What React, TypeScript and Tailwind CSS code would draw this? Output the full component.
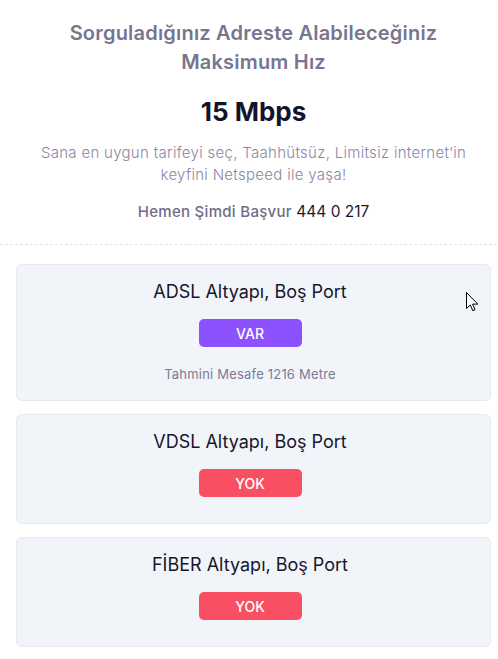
import React from "react";

const font = { fontFamily: "Inter, 'Noto Sans', sans-serif" };

function Card({
  title,
  ok,
  note,
}: {
  title: string;
  ok: boolean;
  note?: string;
}) {
  return (
    <div
      className={`flex flex-col items-center rounded-[6px] border border-[#e6e9ef] bg-[#f1f4f8] pr-[7px] pt-[13px] ${
        note ? "pb-[16px]" : "pb-[26px]"
      }`}
    >
      <div className="text-[18px] leading-[27px] text-[#16162e]">{title}</div>
      <div
        className={`mt-[14px] flex h-[28px] w-[103px] items-center justify-center rounded-[5px] text-[14px] font-medium text-white ${
          ok ? "bg-[#8c52ff]" : "bg-[#f84f62]"
        }`}
      >
        {ok ? "VAR" : "YOK"}
      </div>
      {note && (
        <div className="mt-[17px] text-[13px] leading-[20px] tracking-[0.2px] text-[#7d7a96]">{note}</div>
      )}
    </div>
  );
}

export default function App() {
  return (
    <div className="relative w-full overflow-hidden bg-white" style={font}>
      <div className="w-[507px]">
        <div className="flex flex-col items-center border-b border-dashed border-[#e3e5ea] px-4 pt-[19px] pb-[20px] text-center">
          <h1 className="text-[20px] font-semibold leading-[29px] tracking-[0.2px] text-[#77768f]">
            Sorguladığınız Adreste Alabileceğiniz
            <br />
            Maksimum Hız
          </h1>
          <div className="mt-[15px] text-[26px] font-bold leading-[39px] text-[#13132a]">
            15 Mbps
          </div>
          <p className="mt-[11px] text-[15px] font-light leading-[22px] tracking-[0.3px] text-[#8a87a3]">
            Sana en uygun tarifeyi seç, Taahhütsüz, Limitsiz internet’in
            <br />
            keyfini Netspeed ile yaşa!
          </p>
          <div className="mt-[13px] leading-[24px]">
            <span className="text-[15px] font-medium tracking-[0.3px] text-[#6f6c87]">Hemen Şimdi Başvur </span>
            <span className="text-[15.5px] text-[#1a1a2e]">444 0 217</span>
          </div>
        </div>
        <div className="flex flex-col gap-[13px] px-4 pt-[19px] pb-[20px]">
          <Card title="ADSL Altyapı, Boş Port" ok note="Tahmini Mesafe 1216 Metre" />
          <Card title="VDSL Altyapı, Boş Port" ok={false} />
          <Card title="FİBER Altyapı, Boş Port" ok={false} />
        </div>
      </div>
      <svg
        className="absolute left-[466px] top-[292px]"
        width="13"
        height="20"
        viewBox="0 0 13 20"
      >
        <path
          d="M0.5 0.5 L0.5 16.5 L4.3 12.9 L6.8 18.7 L9 17.8 L6.6 12.1 L11.8 12.1 Z"
          fill="white"
          stroke="black"
          strokeWidth="1"
          strokeLinejoin="round"
        />
      </svg>
    </div>
  );
}
